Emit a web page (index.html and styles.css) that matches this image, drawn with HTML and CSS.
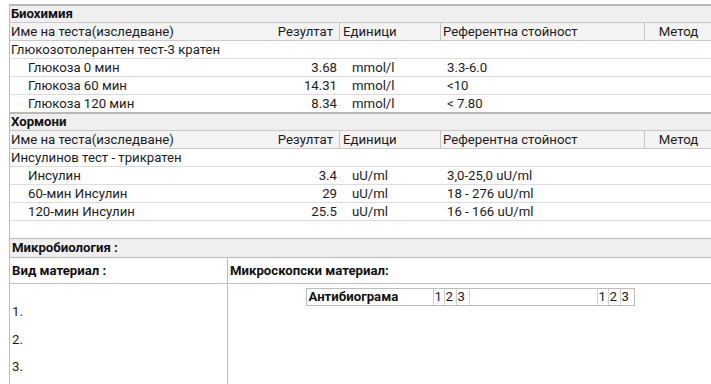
FILE: index.html
```html
<!DOCTYPE html>
<html lang="bg">
<head>
<meta charset="utf-8">
<title>Резултати</title>
<link rel="stylesheet" href="styles.css">
</head>
<body>
<div class="sheet">
  <section class="lab">
    <div class="sec-title">Биохимия</div>
    <div class="row head">
      <div class="c name">Име на теста(изследване)</div>
      <div class="c res">Резултат</div>
      <div class="c unit">Единици</div>
      <div class="c ref">Референтна стойност</div>
      <div class="c meth">Метод</div>
    </div>
    <div class="row group"><div class="c name">Глюкозотолерантен тест-3 кратен</div></div>
    <div class="row"><div class="c name sub">Глюкоза 0 мин</div><div class="c res">3.68</div><div class="c unit">mmol/l</div><div class="c ref">3.3-6.0</div><div class="c meth"></div></div>
    <div class="row"><div class="c name sub">Глюкоза 60 мин</div><div class="c res">14.31</div><div class="c unit">mmol/l</div><div class="c ref">&lt;10</div><div class="c meth"></div></div>
    <div class="row last"><div class="c name sub">Глюкоза 120 мин</div><div class="c res">8.34</div><div class="c unit">mmol/l</div><div class="c ref">&lt; 7.80</div><div class="c meth"></div></div>
  </section>
  <section class="lab">
    <div class="sec-title">Хормони</div>
    <div class="row head">
      <div class="c name">Име на теста(изследване)</div>
      <div class="c res">Резултат</div>
      <div class="c unit">Единици</div>
      <div class="c ref">Референтна стойност</div>
      <div class="c meth">Метод</div>
    </div>
    <div class="row group"><div class="c name">Инсулинов тест - трикратен</div></div>
    <div class="row"><div class="c name sub">Инсулин</div><div class="c res">3.4</div><div class="c unit">uU/ml</div><div class="c ref">3,0-25,0 uU/ml</div><div class="c meth"></div></div>
    <div class="row"><div class="c name sub">60-мин Инсулин</div><div class="c res">29</div><div class="c unit">uU/ml</div><div class="c ref">18 - 276 uU/ml</div><div class="c meth"></div></div>
    <div class="row"><div class="c name sub">120-мин Инсулин</div><div class="c res">25.5</div><div class="c unit">uU/ml</div><div class="c ref">16 - 166 uU/ml</div><div class="c meth"></div></div>
    <div class="row empty last"></div>
  </section>
  <section class="micro">
    <div class="micro-title">Микробиология :</div>
    <div class="micro-grid">
      <div class="mcol left">
        <div class="mhead">Вид материал :</div>
        <ol class="items">
          <li>1.</li>
          <li>2.</li>
          <li>3.</li>
        </ol>
      </div>
      <div class="mcol right">
        <div class="mhead">Микроскопски материал:</div>
        <div class="abg-wrap">
          <div class="abg">
            <div class="ac title">Антибиограма</div>
            <div class="ac d1">1</div>
            <div class="ac d2">2</div>
            <div class="ac d3">3</div>
            <div class="ac blank"></div>
            <div class="ac d1b">1</div>
            <div class="ac d2">2</div>
            <div class="ac d3 lastc">3</div>
          </div>
        </div>
      </div>
    </div>
  </section>
</div>
</body>
</html>
```
FILE: styles.css
```css
html, body {
  margin: 0;
  padding: 0;
  background: #ffffff;
}
body {
  font-family: Roboto, "Noto Sans", Arial, sans-serif;
  font-size: 13.2px;
  color: #1c1c1c;
  overflow: hidden;
}
.sheet {
  margin: 4px 0 0 9px;
  border-left: 1px solid #bdbdbd;
  width: 702px;
}
.sec-title {
  border-top: 2px solid #b9b9b9;
  background: #efefef;
  height: 16px;
  line-height: 16px;
  font-weight: bold;
  padding-left: 1px;
  color: #111;
}
.row {
  display: grid;
  grid-template-columns: 260px 70px 101px 204px 1fr;
  height: 17px;
  line-height: 17px;
  border-bottom: 1px solid #dcdcdc;
  white-space: nowrap;
}
.row.last {
  border-bottom: none;
}
.row.head {
  background: #f3f3f3;
  border-top: 1px solid #c9c9c9;
  border-bottom: 1px solid #c9c9c9;
}
.row.head .c {
  border-right: 1px solid #c6c6c6;
}
.row.head .c.name {
  border-right: none;
}
.row.head .c.meth {
  border-right: none;
}
.c {
  overflow: hidden;
}
.c.name {
  padding-left: 1px;
}
.c.name.sub {
  padding-left: 18px;
}
.row.group .c.name {
  grid-column: 1 / -1;
}
.c.res {
  text-align: right;
  padding-right: 3px;
}
.row.head .c.res {
  padding-right: 6px;
}
.c.unit {
  padding-left: 12px;
}
.row.head .c.unit {
  padding-left: 3px;
}
.c.ref {
  padding-left: 6px;
}
.row.head .c.ref {
  padding-left: 2px;
}
.c.meth {
  text-align: center;
}
.row.empty {
  height: 17px;
}

.micro-title {
  border-top: 1px solid #bcbcbc;
  border-bottom: 1px solid #bcbcbc;
  background: #efefef;
  height: 18px;
  line-height: 18px;
  font-weight: bold;
  padding-left: 2px;
  color: #111;
}
.micro-grid {
  display: grid;
  grid-template-columns: 218px 1fr;
  height: 130px;
}
.mcol.left {
  border-right: 1px solid #bcbcbc;
}
.mhead {
  height: 25px;
  line-height: 26px;
  border-bottom: 1px solid #c2c2c2;
  font-weight: bold;
  padding-left: 2px;
  color: #111;
}
.items {
  list-style: none;
  margin: 0;
  padding: 14px 0 0 2px;
}
.items li {
  height: 27.5px;
  line-height: 27.5px;
}
.abg-wrap {
  display: flex;
  justify-content: center;
  padding: 4px 0 0 0;
}
.abg {
  display: flex;
  border: 1px solid #bdbdbd;
  height: 16px;
  line-height: 16px;
  background: #fff;
}
.ac {
  border-right: 1px solid #cfcfcf;
  padding-left: 1px;
  box-sizing: border-box;
}
.ac.title {
  width: 127px;
  font-weight: bold;
  padding-left: 2px;
  color: #111;
}
.ac.d1 { width: 11px; }
.ac.d1b { width: 11px; }
.ac.d2 { width: 12px; }
.ac.d3 { width: 13px; }
.ac.blank { width: 128px; }
.ac.lastc { border-right: none; width: 13px; }
```
